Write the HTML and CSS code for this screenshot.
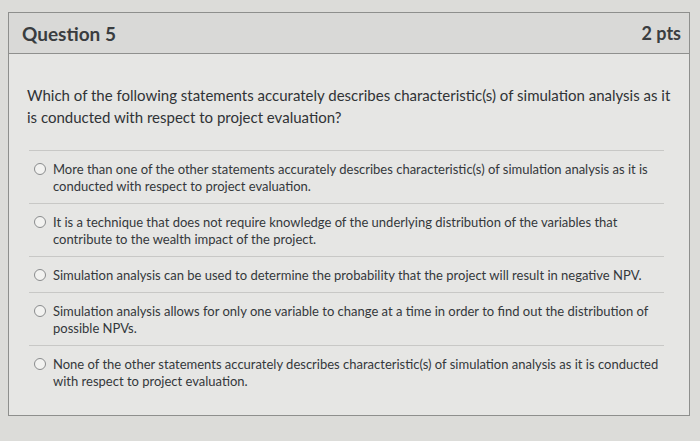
FILE: index.html
```html
<!DOCTYPE html>
<html>
<head>
<meta charset="utf-8">
<link rel="stylesheet" href="styles.css">
</head>
<body>
<div class="page">
  <div class="card">
    <div class="card-header">
      <span class="q-title">Question 5</span>
      <span class="q-pts">2 pts</span>
    </div>
    <div class="card-body">
      <p class="q-text">Which of the following statements accurately describes characteristic(s) of simulation analysis as it<br>is conducted with respect to project evaluation?</p>
      <div class="answers">
        <div class="answer">
          <span class="radio"></span>
          <span class="a-text">More than one of the other statements accurately describes characteristic(s) of simulation analysis as it is<br>conducted with respect to project evaluation.</span>
        </div>
        <div class="answer">
          <span class="radio"></span>
          <span class="a-text">It is a technique that does not require knowledge of the underlying distribution of the variables that<br>contribute to the wealth impact of the project.</span>
        </div>
        <div class="answer">
          <span class="radio"></span>
          <span class="a-text">Simulation analysis can be used to determine the probability that the project will result in negative NPV.</span>
        </div>
        <div class="answer">
          <span class="radio"></span>
          <span class="a-text">Simulation analysis allows for only one variable to change at a time in order to find out the distribution of<br>possible NPVs.</span>
        </div>
        <div class="answer">
          <span class="radio"></span>
          <span class="a-text">None of the other statements accurately describes characteristic(s) of simulation analysis as it is conducted<br>with respect to project evaluation.</span>
        </div>
      </div>
    </div>
  </div>
</div>
</body>
</html>
```

FILE: styles.css
```css
html, body {
  margin: 0;
  padding: 0;
}
body {
  width: 700px;
  height: 441px;
  overflow: hidden;
  background: #dcdcd9;
  font-family: Lato, "Open Sans", sans-serif;
  color: #34383b;
}
.page {
  padding: 12px 10px 0 8px;
}
.card {
  border: 1px solid #8e8f8d;
  background: #e6e6e4;
  height: 404px;
  box-sizing: border-box;
}
.card-header {
  display: flex;
  justify-content: space-between;
  align-items: center;
  height: 40px;
  padding: 0 8px 0 13px;
  background: #d9d9d7;
  border-bottom: 1px solid #8f908e;
}
.q-title {
  font-size: 19px;
  font-weight: 700;
  color: #3a3d40;
}
.q-pts {
  font-size: 18px;
  font-weight: 700;
  color: #3a3d40;
}
.card-body {
  padding: 30px 8px 0 18px;
}
.q-text {
  margin: 0;
  font-size: 15px;
  line-height: 22px;
  color: #303336;
  white-space: nowrap;
}
.answers {
  margin-top: 22px;
  margin-left: 2px;
  margin-right: 17px;
}
.answer {
  display: flex;
  align-items: flex-start;
  border-top: 1px solid #c8c8c6;
  padding: 10px 0 8px 5px;
  font-size: 13px;
  line-height: 17px;
}
.radio {
  flex: none;
  width: 10px;
  height: 10px;
  border: 1.5px solid #8a8c8d;
  border-radius: 50%;
  background: #f2f2f0;
  margin: 2px 7px 0 0;
}
.a-text {
  color: #34383b;
}
```
